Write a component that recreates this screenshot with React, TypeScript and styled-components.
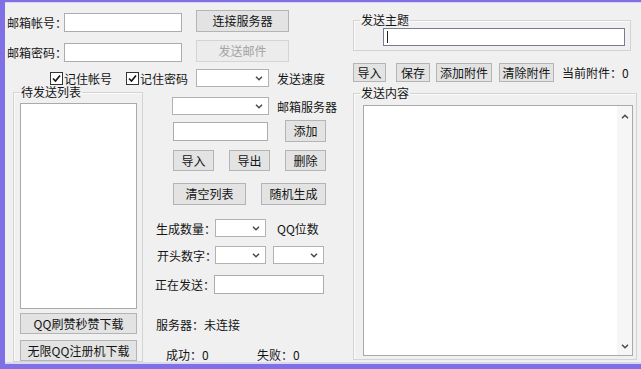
import React from "react";
import styled, { createGlobalStyle } from "styled-components";

const GlobalStyle = createGlobalStyle`
  html, body {
    margin: 0;
    padding: 0;
    background: #f0f0f0;
  }
  * {
    box-sizing: border-box;
  }
`;

const Window = styled.div`
  width: 641px;
  height: 369px;
  display: flex;
  background: #f0f0f0;
  border-left: 5px solid #8070e6;
  border-top: 2px solid #8070e6;
  border-bottom: 5px solid #8070e6;
  box-shadow: inset 0 -2px 0 #dcd8f4, inset 0 1px 0 #d8d3f5;
  font-family: "Noto Sans CJK SC", "Noto Sans", sans-serif;
  font-size: 12px;
  color: #141414;
  overflow: hidden;
`;

const LeftPane = styled.div`
  width: 340px;
  flex-shrink: 0;
  display: flex;
  flex-direction: column;
`;

const RightPane = styled.div`
  width: 296px;
  flex-shrink: 0;
  display: flex;
  flex-direction: column;
`;

const Row = styled.div<{ $mt?: number; $h: number; $align?: string }>`
  display: flex;
  align-items: ${(p) => p.$align || "center"};
  margin-top: ${(p) => p.$mt || 0}px;
  height: ${(p) => p.$h}px;
  flex-shrink: 0;
`;

const Label = styled.span<{ $ml?: number; $w?: number }>`
  display: inline-block;
  margin-left: ${(p) => p.$ml || 0}px;
  width: ${(p) => (p.$w ? `${p.$w}px` : "auto")};
  line-height: 19px;
  white-space: nowrap;
  flex-shrink: 0;
`;

const Button = styled.button<{ $w: number; $h: number; $ml?: number; $mt?: number }>`
  width: ${(p) => p.$w}px;
  height: ${(p) => p.$h}px;
  margin: ${(p) => p.$mt || 0}px 0 0 ${(p) => p.$ml || 0}px;
  padding: 0;
  flex-shrink: 0;
  font: inherit;
  color: #141414;
  background: #e3e3e3;
  border: 1px solid #b4b4b4;
  border-radius: 0;
  line-height: 1;
  white-space: nowrap;

  &:disabled {
    color: #a3a3a3;
    background: #ececec;
    border-color: #d4d4d4;
  }
`;

const TextBox = styled.div<{ $w: number; $h: number; $ml?: number; $focus?: boolean }>`
  width: ${(p) => p.$w}px;
  height: ${(p) => p.$h}px;
  margin-left: ${(p) => p.$ml || 0}px;
  flex-shrink: 0;
  background: #fff;
  border: 1px solid ${(p) => (p.$focus ? "#7a7a90" : "#acacac")};
  position: relative;
`;

const Caret = styled.span`
  position: absolute;
  left: 3px;
  top: 2px;
  width: 1px;
  height: 12px;
  background: #222;
`;

const ComboBox = styled.div<{ $w: number; $ml?: number }>`
  width: ${(p) => p.$w}px;
  height: 18px;
  margin-left: ${(p) => p.$ml || 0}px;
  flex-shrink: 0;
  background: #fff;
  border: 1px solid #b2b2b2;
  display: flex;
  align-items: center;
  justify-content: flex-end;
  padding-right: 5px;

  svg {
    display: block;
  }
`;

const CheckWrap = styled.label<{ $ml?: number }>`
  display: flex;
  align-items: center;
  margin-left: ${(p) => p.$ml || 0}px;
  flex-shrink: 0;
  white-space: nowrap;
`;

const CheckBox = styled.span`
  width: 13px;
  height: 13px;
  margin-right: 1px;
  background: #fff;
  border: 1px solid #333;
  display: flex;
  align-items: center;
  justify-content: center;
`;

const Lower = styled.div`
  display: flex;
  align-items: flex-start;
`;

const GroupBox = styled.fieldset<{ $ml: number; $mt: number; $w: number }>`
  margin: ${(p) => p.$mt}px 0 0 ${(p) => p.$ml}px;
  width: ${(p) => p.$w}px;
  padding: 0 0 ${(p) => 0}px 0;
  border: 1px solid #d3d3d3;
  box-shadow: inset 1px 1px 0 #fbfbfb;
  min-width: 0;
  flex-shrink: 0;
`;

const Legend = styled.legend`
  margin-left: 6px;
  padding: 0 1px;
  line-height: 14px;
  font-size: 12px;
`;

const ListBox = styled.div`
  width: 117px;
  height: 206px;
  margin: 4px 0 0 6px;
  background: #fff;
  border: 1px solid #aaaaaa;
`;

const MidCol = styled.div`
  margin: 10px 0 0 7px;
  display: flex;
  flex-direction: column;
`;

const StatusText = styled.div<{ $mt: number; $ml: number }>`
  margin: ${(p) => p.$mt}px 0 0 ${(p) => p.$ml}px;
  line-height: 14px;
  white-space: nowrap;
`;

const ContentArea = styled.div`
  width: 270px;
  height: 251px;
  margin: 5px 0 3px 9px;
  background: #fff;
  border: 1px solid #a9a9a9;
  display: flex;
  justify-content: flex-end;
`;

const ScrollTrack = styled.div`
  width: 15px;
  height: 100%;
  background: #f6f6f6;
  display: flex;
  flex-direction: column;
  justify-content: space-between;
  align-items: center;
  padding: 8px 0 6px;
`;

const Chevron = ({ up }: { up?: boolean }) => (
  <svg width="8" height="5" viewBox="0 0 8 5">
    <polyline
      points={up ? "1,4.2 4,1.2 7,4.2" : "1,0.8 4,3.8 7,0.8"}
      fill="none"
      stroke="#4a4a4a"
      strokeWidth="1.5"
    />
  </svg>
);

const Combo = ({ w, ml }: { w: number; ml?: number }) => (
  <ComboBox $w={w} $ml={ml}>
    <Chevron />
  </ComboBox>
);

const Check = ({ label, ml }: { label: string; ml?: number }) => (
  <CheckWrap $ml={ml}>
    <CheckBox>
      <svg width="9" height="9" viewBox="0 0 9 9">
        <polyline points="1,4.5 3.5,7 8,1.5" fill="none" stroke="#111" strokeWidth="1.6" />
      </svg>
    </CheckBox>
    {label}
  </CheckWrap>
);

export default function App() {
  return (
    <>
      <GlobalStyle />
      <Window>
        <LeftPane>
          <Row $mt={8} $h={22} $align="flex-end">
            <Label $ml={2} $w={57}>邮箱帐号：</Label>
            <TextBox $w={118} $h={19} />
            <Button $w={93} $h={22} $ml={14}>连接服务器</Button>
          </Row>
          <Row $mt={8} $h={22} $align="flex-end">
            <Label $ml={2} $w={57}>邮箱密码：</Label>
            <TextBox $w={118} $h={19} />
            <Button $w={93} $h={22} $ml={14} disabled>发送邮件</Button>
          </Row>
          <Row $mt={7} $h={18}>
            <Check ml={45} label="记住帐号" />
            <Check ml={14} label="记住密码" />
            <Combo w={73} ml={8} />
            <Label $ml={8}>发送速度</Label>
          </Row>
          <Lower>
            <GroupBox $ml={8} $mt={-2} $w={130}>
              <Legend>待发送列表</Legend>
              <ListBox />
              <Button $w={117} $h={21} $ml={6} $mt={4}>QQ刷赞秒赞下载</Button>
              <Button $w={117} $h={21} $ml={6} $mt={6}>无限QQ注册机下载</Button>
            </GroupBox>
            <MidCol>
              <Row $h={18}>
                <Combo w={97} ml={22} />
                <Label $ml={8}>邮箱服务器</Label>
              </Row>
              <Row $mt={5} $h={22}>
                <TextBox $w={95} $h={19} $ml={23} />
                <Button $w={41} $h={22} $ml={17}>添加</Button>
              </Row>
              <Row $mt={8} $h={21}>
                <Button $w={41} $h={21} $ml={23}>导入</Button>
                <Button $w={41} $h={21} $ml={15}>导出</Button>
                <Button $w={41} $h={21} $ml={15}>删除</Button>
              </Row>
              <Row $mt={12} $h={22}>
                <Button $w={73} $h={22} $ml={23}>清空列表</Button>
                <Button $w={65} $h={22} $ml={15}>随机生成</Button>
              </Row>
              <Row $mt={14} $h={18}>
                <Label $ml={6} $w={59}>生成数量：</Label>
                <Combo w={51} />
                <Label $ml={11}>QQ位数</Label>
              </Row>
              <Row $mt={9} $h={18}>
                <Label $ml={7} $w={58}>开头数字：</Label>
                <Combo w={51} />
                <Combo w={51} ml={7} />
              </Row>
              <Row $mt={11} $h={19}>
                <Label $ml={5} $w={59}>正在发送：</Label>
                <TextBox $w={110} $h={19} />
              </Row>
              <StatusText $mt={24} $ml={6}>服务器：未连接</StatusText>
              <Row $mt={15} $h={14}>
                <Label $ml={16} $w={91}>成功：0</Label>
                <Label>失败：0</Label>
              </Row>
            </MidCol>
          </Lower>
        </LeftPane>
        <RightPane>
          <GroupBox $ml={8} $mt={11} $w={278}>
            <Legend>发送主题</Legend>
            <Row $mt={1} $h={18}>
              <TextBox $w={242} $h={18} $ml={29} $focus>
                <Caret />
              </TextBox>
            </Row>
            <Row $h={4} />
          </GroupBox>
          <Row $mt={12} $h={19}>
            <Button $w={33} $h={19} $ml={8}>导入</Button>
            <Button $w={34} $h={19} $ml={10}>保存</Button>
            <Button $w={56} $h={19} $ml={6}>添加附件</Button>
            <Button $w={55} $h={19} $ml={7}>清除附件</Button>
            <Label $ml={8}>当前附件：0</Label>
          </Row>
          <GroupBox $ml={8} $mt={4} $w={284}>
            <Legend>发送内容</Legend>
            <ContentArea>
              <ScrollTrack>
                <Chevron up />
                <Chevron />
              </ScrollTrack>
            </ContentArea>
          </GroupBox>
        </RightPane>
      </Window>
    </>
  );
}
